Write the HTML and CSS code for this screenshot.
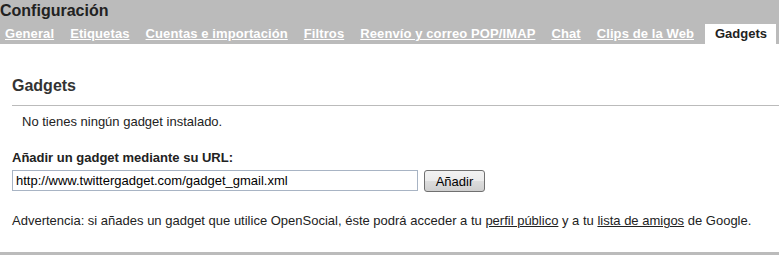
FILE: index.html
```html
<!DOCTYPE html>
<html lang="es">
<head>
  <meta charset="UTF-8">
  <title>Configuración</title>
  <link rel="stylesheet" href="styles.css">
</head>
<body>

  <!-- cabecera con pestañas -->
  <div class="header">
    <div class="title">Configuración</div>
    <div class="tabs">
      <a href="#" class="tab">General</a>
      <a href="#" class="tab">Etiquetas</a>
      <a href="#" class="tab">Cuentas e importación</a>
      <a href="#" class="tab">Filtros</a>
      <a href="#" class="tab">Reenvío y correo POP/IMAP</a>
      <a href="#" class="tab">Chat</a>
      <a href="#" class="tab">Clips de la Web</a>
      <span class="tab active">Gadgets</span>
    </div>
  </div>

  <!-- contenido -->
  <div class="content">
    <h2>Gadgets</h2>
    <p class="empty">No tienes ningún gadget instalado.</p>
    <div class="label">Añadir un gadget mediante su URL:</div>
    <div class="add-row">
      <input type="text" class="url" value="http://www.twittergadget.com/gadget_gmail.xml">
      <button class="add">Añadir</button>
    </div>
    <p class="warning">Advertencia: si añades un gadget que utilice OpenSocial, éste podrá acceder a tu <a href="#">perfil público</a> y a tu <a href="#">lista de amigos</a> de Google.</p>
  </div>

</body>
</html>
```

FILE: styles.css
```css
body {
  font-family: 'Liberation Sans', Arial, sans-serif;
  font-size: 13px;
  color: #222;
  margin: 0;
  padding: 0;
  background: white;
  border-bottom: 3px solid #bbb;
  height: 252px;
  overflow: hidden;
}
.header {
  background: #bbb;
  padding-top: 2px;
}
.title {
  font-size: 16px;
  font-weight: bold;
  line-height: 18px;
  color: #222;
  margin-bottom: 4px;
}
.tabs {
  display: flex;
  line-height: 16px;
  padding-right: 3px;
}
.tab {
  font-weight: bold;
  color: white;
  padding: 2px 8px;
  letter-spacing: 0.1px;
  white-space: nowrap;
  flex-shrink: 0;
}
.tab:first-child {
  padding-left: 5px;
}
.tab.active {
  background: white;
  color: #222;
  letter-spacing: 0;
  padding: 2px 9px 2px 10px;
  margin-left: auto;
}
.content {
  padding-left: 12px;
}
h2 {
  font-size: 16px;
  line-height: 18px;
  margin: 33px 0 0;
  padding-bottom: 10px;
  border-bottom: 1px solid #bbb;
  color: #333;
}
.empty {
  margin: 8px 0 0 10px;
  line-height: 16px;
}
.label {
  font-weight: bold;
  line-height: 16px;
  margin-top: 20px;
}
.add-row {
  display: flex;
  align-items: flex-start;
  gap: 6px;
  margin-top: 4px;
}
.url {
  width: 406px;
  height: 21px;
  box-sizing: border-box;
  border: 1px solid #a8b4c4;
  padding: 1px 3px;
  font: 13px 'Liberation Sans', Arial, sans-serif;
  color: #000;
}
.add {
  width: 61px;
  height: 22px;
  border: 1px solid #707070;
  border-radius: 3px;
  background: linear-gradient(to bottom, #f2f2f2, #ebebeb 50%, #dddddd 50%, #cfcfcf);
  font: 13px 'Liberation Sans', Arial, sans-serif;
  color: #000;
  padding: 0;
}
.warning {
  margin: 21px 0 0;
  line-height: 16px;
}
.warning a {
  color: #222;
}
```
